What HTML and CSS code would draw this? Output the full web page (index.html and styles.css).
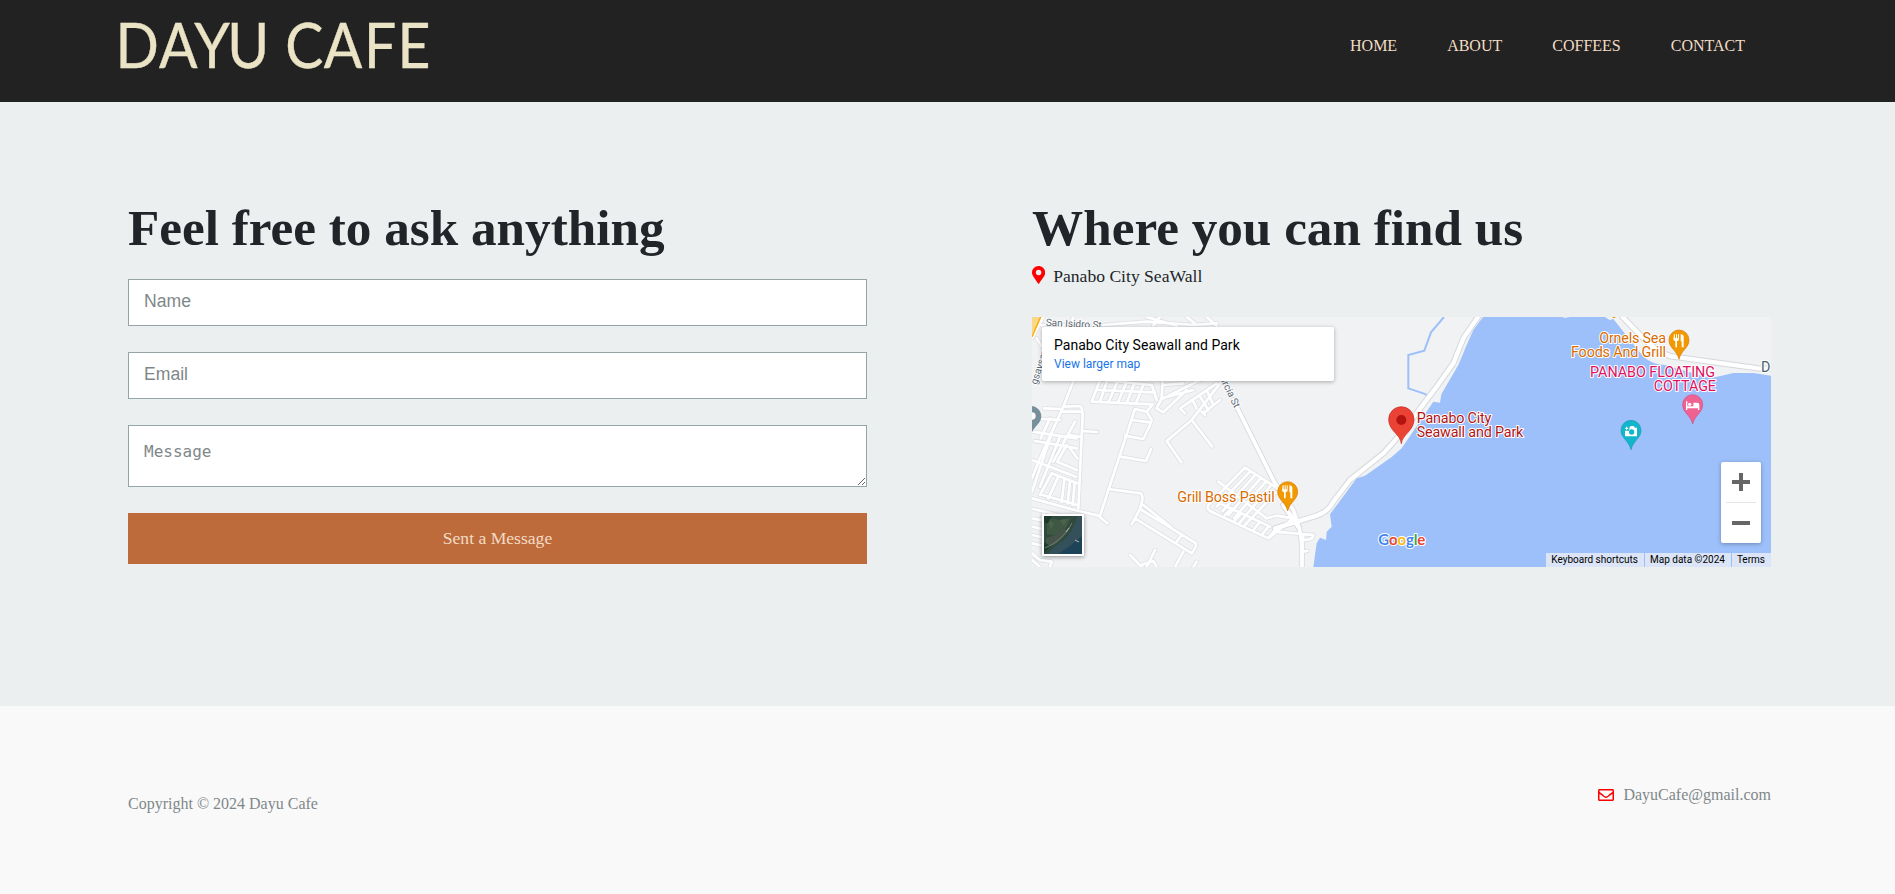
FILE: index.html
```html
<!DOCTYPE html>
<html lang="en">
<head>
<meta charset="utf-8">
<title>Dayu Cafe</title>
<link rel="stylesheet" href="styles.css">
</head>
<body>
<header class="navbar">
  <svg class="logo" width="360" height="80" viewBox="0 0 360 80" role="img" aria-label="Dayu Cafe">
    <text class="logo-text" transform="scale(.92 1)" y="68" x="12.4 59.8 98 134 197 239 282.5 319">DAYUCAFE</text>
  </svg>
  <nav class="nav-links">
    <a>HOME</a><a>ABOUT</a><a>COFFEES</a><a>CONTACT</a>
  </nav>
</header>

<main class="contact">
  <section class="column">
    <h2 class="title">Feel free to ask anything</h2>
    <form class="form">
      <input class="field" type="text" placeholder="Name">
      <input class="field" type="email" placeholder="Email">
      <textarea class="field message" placeholder="Message"></textarea>
      <button class="send" type="button">Sent a Message</button>
    </form>
  </section>

  <section class="column">
    <h2 class="title">Where you can find us</h2>
    <p class="place">
      <svg width="13.200" height="17.600" viewBox="0 0 384 512"><path fill="#f00" d="M172 501C27 291 0 269 0 192 0 86 86 0 192 0s192 86 192 192c0 77-27 99-172 309a24 24 0 0 1-40 0zM192 272a80 80 0 1 0 0-160 80 80 0 0 0 0 160z"/></svg>
      <span>Panabo City SeaWall</span>
    </p>
    <div class="map">
      <svg class="map-canvas" width="739" height="250" viewBox="36 36 2217 750">
        <defs>
          <g id="streets">
            <path d="M36 100L70 36M50 100L66 125M60 60L200 64M250 60L380 50L520 60L590 55M560 36L590 62M380 36L470 62M160 36L150 62M420 36L400 62M500 36L530 60"/>
            <path d="M165 215L130 305L60 460L36 520M130 305L180 303Q188 308 188 330L175 610M125 320L186 320M36 340L120 345M72 310L125 312M36 380L170 400M45 408L172 430M36 465L168 515M90 340L62 400M95 385L36 560M120 395L60 545M165 350L100 470M140 420L112 470L170 495M150 430L172 460M150 390L178 395M188 378L230 381"/>
            <path d="M95 505L172 535M95 505L60 570M115 515L85 580M133 525L125 590M150 530L143 595M164 535L158 600M60 568L172 600M36 580L175 618L235 632L262 655M235 632L242 628M40 612L115 630L108 655M72 622L66 640M36 640L110 655M36 665L66 672M36 690L66 697M36 715L66 722M36 745L60 765L95 770L90 786M36 765L60 786"/>
            <path d="M215 290L398 298M215 290L240 225M235 255L405 262M262 225L240 290M290 235L266 290M318 235L294 292M343 235L320 294M370 240L348 295M250 225L395 240L410 285M398 298L380 320L345 312L240 632M380 320L395 345L390 360L370 402L315 392M335 345L390 352"/>
            <path d="M300 455L378 468L393 432"/>
            <path d="M428 220L425 280L520 255M425 280L410 310L430 322L500 255M430 240L490 235M550 220L430 280M600 235L515 345L440 408L484 472M515 345L576 424M495 325L480 310L590 235M520 290L530 310M550 325L600 285M560 255L580 300M540 275L565 315M545 320L555 330"/>
            <path d="M265 552L362 565Q370 570 366 590L360 612L335 658M360 612L528 715Q530 725 515 745L345 640M370 600L455 668M470 710L485 690M490 740L465 786M530 770L520 786M330 750L365 786M405 735L380 786M365 780L400 768L410 786"/>
            <path d="M675 488L772 550M675 488L565 600Q560 612 570 618L745 700L820 640L770 632L740 640L595 530M690 500L590 605M705 511L608 618M720 522L625 630M735 533L642 640M750 545L660 652M768 562L675 660M600 595L750 665M615 630L635 610M645 645L665 625M675 660L695 638M700 675L720 650M725 690L745 665M745 700L765 675"/>
            <path d="M765 680L880 690Q880 705 850 705M850 690L846 740L862 738M846 740V786"/>
          </g>
          <g id="avenues">
            <path d="M790 600L835 665M765 670L890 632Q925 620 940 590L990 525L1090 445L1144 385L1250 245L1300 175L1330 100L1385 20"/>
            <path d="M1808 36L1875 105Q1930 152 1960 155L2215 190L2260 192"/>
          </g>
          <path id="garcia" d="M640 285L765 535L820 615Q845 680 846 730V800"/>
          <path id="pin" d="M0 44C-6 17-30 10-30-14a30 30 0 1 1 60 0C30 10 6 17 0 44z"/>
          <path id="fork" fill="#fff" d="M-15-30h3v12h3v-12h3v12h3v-12h3v15q0 4-6 6V9h-5V-9q-6-2-6-6zM5-30q9 0 9 8V9H8V-9H5z"/>
        </defs>
        <rect x="36" y="36" width="2217" height="750" fill="#f1f2f4"/>
        <g fill="#9dc0fa">
          <path d="M1389 36H1630L1632 39L1650 36H1755L1769 45L1780 42L1870 155Q1900 180 1935 180L2070 220L2105 212L2140 204H2200L2253 212V786H880L890 715L900 698L918 705L920 680L935 665L930 628L1010 520L1035 512L1115 456L1145 430L1240 290L1260 293L1264 268L1315 180L1340 120L1360 75Z"/>
          <path fill="none" stroke="#9dc0fa" stroke-width="6" d="M1272 36L1233 82L1213 137L1165 150V250L1212 266L1233 277"/>
        </g>
        <use href="#streets" class="street-edge"/>
        <use href="#garcia" class="garcia-edge"/>
        <use href="#avenues" class="avenue-edge"/>
        <use href="#streets" class="street"/>
        <use href="#garcia" class="garcia"/>
        <use href="#avenues" class="avenue"/>
        <path d="M36 36H62L36 95Z" fill="#fbd887"/>
        <path d="M62 36L36 96" stroke="#f9ab00" stroke-width="4"/>
        <path d="M1778 36h8v3h-8z" fill="#f29900"/>

        <g class="road-name">
          <text x="77" y="62" transform="rotate(3 77 62)">San Isidro St</text>
          <text x="50" y="240" transform="rotate(-72 50 240)">gsaysay</text>
          <text x="603" y="228" transform="rotate(64 603 228)">ırcia St</text>
        </g>

        <path d="M30 303a32 32 0 0 1 34 31C63 355 47 360 36 382z" fill="#78909c"/>
        <circle cx="36" cy="333" r="11" fill="#fff"/>

        <g class="poi">
          <text x="472" y="591" fill="#d96c00" textLength="292">Grill Boss Pastil</text>
          <text x="1938" y="115" fill="#d96c00" text-anchor="end" textLength="200">Ornels Sea</text>
          <text x="1938" y="157" fill="#d96c00" text-anchor="end" textLength="285">Foods And Grill</text>
          <text x="2085" y="216" fill="#e0115f" text-anchor="end" textLength="375">PANABO FLOATING</text>
          <text x="2088" y="258" fill="#e0115f" text-anchor="end" textLength="187">COTTAGE</text>
          <text x="1190" y="354" fill="#b31412" textLength="224">Panabo City</text>
          <text x="1190" y="396" fill="#b31412" textLength="320">Seawall and Park</text>
          <text x="2223" y="201" fill="#4a6572">De</text>
        </g>

        <g transform="translate(803 574)"><use href="#pin" fill="#f29900" stroke="#d97a00" stroke-width="2"/><use href="#fork" y="-3"/></g>
        <g transform="translate(1977 119)"><use href="#pin" fill="#f29900" stroke="#d97a00" stroke-width="2"/><use href="#fork" y="-1"/></g>
        <g transform="translate(2018 313)"><use href="#pin" fill="#f06292" stroke="#d84a7c" stroke-width="2"/><path fill="#fff" d="M-20-24h4v15H2v-11h12q6 0 6 7V2h-4v-5h-32v5h-4z"/><circle cx="-9" cy="-15" r="5" fill="#fff"/></g>
        <g transform="translate(1833 390)"><use href="#pin" fill="#12b5cb" stroke="#129aad" stroke-width="2"/><path fill="#fff" d="M-5-22l4-5H8l4 5h6V4h-36v-17h13z"/><circle cx="2" cy="-9" r="8" fill="#12b5cb"/><path fill="#fff" d="M-13-26l2 4 4 2-4 2-2 4-2-4-4-2 4-2z"/></g>
        <path d="M1144 416C1142 388 1106 378 1106 343a38 38 0 1 1 76 0C1182 378 1147 388 1144 416z" fill="#ea4335" stroke="#c5221f" stroke-width="2"/>
        <circle cx="1144" cy="345" r="15" fill="#b31412"/>

        <text class="google" x="1075" y="721" textLength="141"><tspan fill="#4285f4">G</tspan><tspan fill="#ea4335">o</tspan><tspan fill="#fbbc04">o</tspan><tspan fill="#4285f4">g</tspan><tspan fill="#34a853">l</tspan><tspan fill="#ea4335">e</tspan></text>
      </svg>

      <div class="map-card">
        <div class="map-card-name">Panabo City Seawall and Park</div>
        <a class="map-card-link">View larger map</a>
      </div>

      <svg class="satellite" width="42" height="42" viewBox="0 0 42 42">
        <rect width="42" height="42" rx="1" fill="#fff"/>
        <rect x="2" y="2" width="38" height="38" fill="#2f4a3c"/>
        <path d="M5 4l12 2 12-2-5 10-9 8-10-2z" fill="#3f5844"/>
        <path d="M6 6l6 3-3 6zM18 6l8-1-4 7z" fill="#4a6349"/>
        <path d="M4 24l10-3 8-7 4 4-12 12-10 3z" fill="#465449"/>
        <path d="M40 2v38H6l6-7 11-8 7-9 6-14z" fill="#34505a"/>
        <path d="M40 22v18H16l12-8z" fill="#1d4358"/>
        <path d="M2 2h8L6 9H2zM2 28l6 4-6 8z" fill="#1f3a2c"/>
        <path d="M3 34l8-4 8-6 7-8 4-7" fill="none" stroke="#76877f" stroke-width=".9"/>
        <path d="M24 18l3-4M33 26l4 2" stroke="#9aa8a2" stroke-width="1.200"/>
      </svg>

      <div class="zoom">
        <svg width="40" height="40" viewBox="0 0 40 40"><path fill="#666" d="M11 18h7v-7h4v7h7v4h-7v7h-4v-7h-7z"/></svg>
        <span class="zoom-line"></span>
        <svg width="40" height="40" viewBox="0 0 40 40"><path fill="#666" d="M11 18h18v4H11z"/></svg>
      </div>

      <div class="map-legal"><span>Keyboard shortcuts</span><span>Map data ©2024</span><span>Terms</span></div>
    </div>
  </section>
</main>

<footer class="footer">
  <p class="copyright">Copyright © 2024 Dayu Cafe</p>
  <p class="mail">
    <svg width="16" height="16" viewBox="0 0 512 512"><path fill="#f00" d="M464 64H48C21 64 0 85 0 112v288c0 27 21 48 48 48h416c27 0 48-21 48-48V112c0-27-21-48-48-48zm0 48v41c-22 18-58 47-135 107-17 13-50 45-73 45s-56-32-73-45C106 200 70 171 48 153v-41zM48 400V215c23 18 55 43 105 83 22 17 61 55 103 55s80-37 103-55c50-40 82-65 105-83v185z"/></svg>
    <span>DayuCafe@gmail.com</span>
  </p>
</footer>
</body>
</html>
```
FILE: styles.css
```css
* { box-sizing: border-box; }
body {
  margin: 0;
  background: #f9f9f9;
  color: #212529;
  font-family: "Liberation Serif", "Times New Roman", serif;
}
h2, p { margin: 0; }

.navbar {
  display: flex;
  justify-content: space-between;
  align-items: flex-start;
  height: 102px;
  padding: 0 150px 0 104px;
  background: #222;
}
.logo { display: block; }
.logo-text {
  font: 400 62px Lato, sans-serif;
  fill: #ebe3c5;
  stroke: #ebe3c5;
  stroke-width: .4;
}
.nav-links {
  display: flex;
  gap: 50px;
  padding-top: 36px;
  font-size: 16px;
  line-height: 20px;
  color: #f2dcc4;
}

.contact {
  display: grid;
  grid-template-columns: 739px 739px;
  column-gap: 165px;
  height: 604px;
  padding: 95px 124px 0 128px;
  background: #ebeff0;
}
.title {
  font-size: 51.200px;
  line-height: 61px;
  white-space: nowrap;
}
.form { display: flex; flex-direction: column; gap: 26px; padding-top: 21px; }
.field {
  display: block;
  width: 100%;
  height: 47px;
  margin: 0;
  padding: 0 15px 3px;
  border: 1px solid #95a5a6;
  border-radius: 0;
  background: #fff;
  font: 17.600px "Liberation Sans", Arial, sans-serif;
  outline: none;
}
.field::placeholder { color: #7f8889; opacity: 1; }
.message {
  height: 62px;
  padding: 15px;
  font: 16px/21px "DejaVu Sans Mono", monospace;
}
.send {
  height: 51px;
  padding: 0 0 1px;
  border: 0;
  background: #be6b3c;
  color: #f2dcc4;
  font: 17.600px "Liberation Serif", "Times New Roman", serif;
}
.place {
  display: flex;
  align-items: center;
  gap: 8px;
  height: 36px;
  font-size: 17.600px;
}
.place svg { margin-bottom: 2px; }

.map {
  position: relative;
  height: 250px;
  margin-top: 23px;
  overflow: hidden;
  font-family: Roboto, sans-serif;
}
.map-canvas { display: block; }
.street-edge, .street, .avenue-edge, .avenue, .garcia-edge, .garcia { fill: none; stroke-linecap: round; stroke-linejoin: round; }
.street-edge { stroke: #dfe1e5; stroke-width: 13; }
.street { stroke: #fff; stroke-width: 8; }
.garcia-edge { stroke: #dadde1; stroke-width: 17; }
.garcia { stroke: #fff; stroke-width: 11; }
.avenue-edge { stroke: #d5d8dc; stroke-width: 19; }
.avenue { stroke: #fff; stroke-width: 13; }
.road-name text { font-size: 30px; fill: #5f6b76; stroke: #fff; stroke-width: 5; paint-order: stroke; }
.poi text { font-size: 43px; stroke: #fff; stroke-width: 6; stroke-linejoin: round; paint-order: stroke; }
.google { font: 700 45px Lato, sans-serif; stroke: #fff; stroke-width: 6; stroke-linejoin: round; paint-order: stroke; }

.map-card {
  position: absolute;
  top: 10px;
  left: 10px;
  width: 292px;
  height: 54px;
  padding: 9px 12px;
  border-radius: 2px;
  background: #fff;
  box-shadow: 0 1px 4px rgba(0, 0, 0, .3);
}
.map-card-name { font-size: 14px; line-height: 19px; letter-spacing: .03px; color: #000; }
.map-card-link { display: block; font-size: 12px; line-height: 18px; color: #1a73e8; }
.satellite { position: absolute; left: 10px; top: 197px; filter: drop-shadow(0 1px 2px rgba(0, 0, 0, .4)); }
.zoom {
  position: absolute;
  right: 10px;
  top: 145px;
  display: flex;
  flex-direction: column;
  align-items: center;
  width: 40px;
  border-radius: 2px;
  background: #fff;
  box-shadow: 0 1px 4px rgba(0, 0, 0, .3);
}
.zoom svg { display: block; }
.zoom-line { width: 30px; height: 1px; background: #e6e6e6; }
.map-legal {
  position: absolute;
  right: 0;
  bottom: 0;
  display: flex;
  gap: 1px;
  font-size: 10px;
  line-height: 14px;
  color: #000;
}
.map-legal span { padding: 0 6px 0 5px; background: rgba(245, 245, 245, .7); }

.footer {
  display: flex;
  justify-content: space-between;
  align-items: flex-start;
  height: 188px;
  padding: 0 124px 0 128px;
  font-size: 16px;
  line-height: 24px;
  color: #7f8889;
}
.copyright { padding-top: 86px; }
.mail { display: flex; align-items: center; gap: 9px; padding-top: 77px; }
```
